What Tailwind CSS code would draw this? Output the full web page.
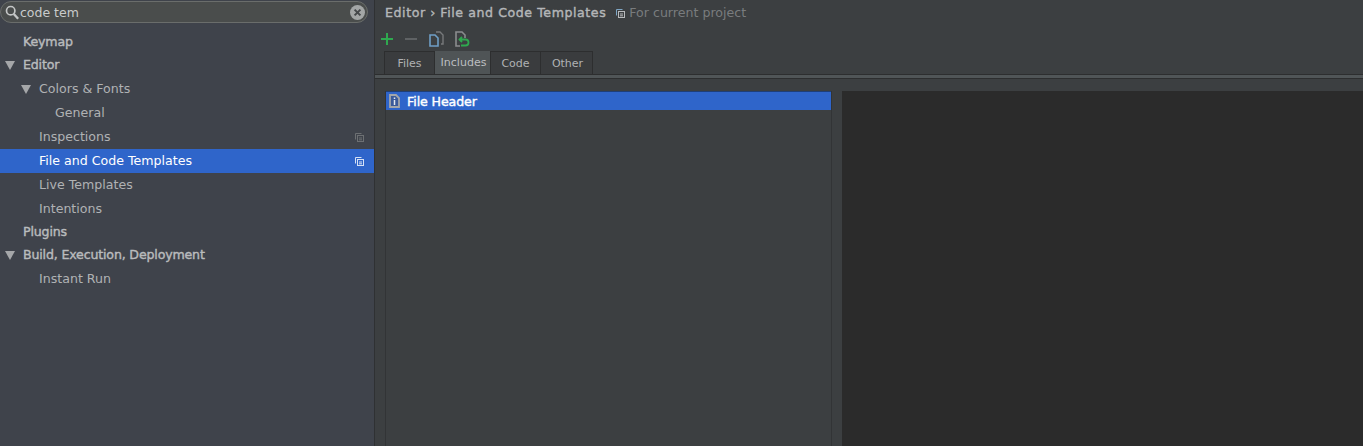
<!DOCTYPE html>
<html lang="en">
<head>
  <meta charset="UTF-8" />
  <title>Settings - File and Code Templates</title>
  <script src="https://cdn.jsdelivr.net/npm/@tailwindcss/browser@4"></script>
</head>
<body class="w-[1363px] h-[446px] overflow-hidden flex bg-[#3c3f41] font-['DejaVu_Sans',sans-serif] text-[12.6px] text-[#b0b2b4]">

  <!-- sidebar -->
  <aside class="w-[375px] h-full shrink-0 bg-[#3f434b] border-r border-[#2f3133]">
    <div class="h-[31px] pt-px pr-[6px]">
      <div class="h-[22px] flex items-center rounded-full border border-[#6a6d6b] bg-[#4a4d4c] pl-[4px] pr-[2px]">
        <svg class="w-[14px] h-[15px] shrink-0" viewBox="0 0 14 15" fill="none" stroke="#c4c6c6"><circle cx="5.7" cy="5.7" r="4.2" stroke-width="1.7"/><path d="M8.8 9l4.4 4.8" stroke-width="2.4"/></svg>
        <span class="ml-px pt-[2px] text-[#c9cbcb] text-[12.5px]">code tem</span>
        <svg class="ml-auto w-[15px] h-[15px]" viewBox="0 0 15 15"><circle cx="7.5" cy="7.5" r="7.5" fill="#a3a6a6"/><path d="M4.6 4.6l5.8 5.8M10.4 4.6l-5.8 5.8" stroke="#45484a" stroke-width="2"/></svg>
      </div>
    </div>
    <div class="h-[23px] flex items-center pl-[23px] [-webkit-text-stroke:0.4px] tracking-[-0.17px] text-[#b9bbbd]">Keymap</div>
    <div class="h-[23px] flex items-center [-webkit-text-stroke:0.4px] tracking-[-0.17px] text-[#b9bbbd]">
      <svg class="w-[10px] h-[9px] ml-[5px] mr-[8px]" viewBox="0 0 10 9"><path d="M0 0h10L5 9z" fill="#a5a7a9"/></svg>Editor
    </div>
    <div class="h-[24px] flex items-center">
      <svg class="w-[10px] h-[9px] ml-[21px] mr-[8px]" viewBox="0 0 10 9"><path d="M0 0h10L5 9z" fill="#a5a7a9"/></svg>Colors &amp; Fonts
    </div>
    <div class="h-[24px] flex items-center pl-[55px]">General</div>
    <div class="h-[24px] flex items-center pl-[39px] pr-[10px]">
      Inspections
      <svg class="ml-auto w-[9px] h-[9px]" viewBox="0 0 9 9" fill="none" stroke="#6d7073"><path d="M6.5 .5h-6v6"/><rect x="2.5" y="2.5" width="6" height="6"/><path d="M4 5h3M4 6.8h3"/></svg>
    </div>
    <div class="h-[24px] flex items-center pl-[39px] pr-[10px] bg-[#2f65ca] text-white">
      File and Code Templates
      <svg class="ml-auto w-[9px] h-[9px]" viewBox="0 0 9 9" fill="none" stroke="#d5e1f6"><path d="M6.5 .5h-6v6"/><rect x="2.5" y="2.5" width="6" height="6"/><path d="M4 5h3M4 6.8h3"/></svg>
    </div>
    <div class="h-[24px] flex items-center pl-[39px]">Live Templates</div>
    <div class="h-[24px] flex items-center pl-[39px]">Intentions</div>
    <div class="h-[23px] flex items-center pl-[23px] [-webkit-text-stroke:0.4px] tracking-[-0.17px] text-[#b9bbbd]">Plugins</div>
    <div class="h-[23px] flex items-center [-webkit-text-stroke:0.4px] tracking-[-0.17px] text-[#b9bbbd]">
      <svg class="w-[10px] h-[9px] ml-[5px] mr-[8px]" viewBox="0 0 10 9"><path d="M0 0h10L5 9z" fill="#a5a7a9"/></svg>Build, Execution, Deployment
    </div>
    <div class="h-[24px] flex items-center pl-[39px]">Instant Run</div>
  </aside>

  <!-- main panel -->
  <main class="flex-1 h-full flex flex-col">
    <div class="h-[26px] flex items-center pl-[10px] shrink-0">
      <span class="[-webkit-text-stroke:0.4px] tracking-[0.56px] text-[#b4b6b8]">Editor › File and Code Templates</span>
      <svg class="ml-[10px] w-[9px] h-[9px]" viewBox="0 0 9 9" fill="none" stroke="#7fa6c4"><path d="M6.5 .5h-6v6"/><rect x="2.5" y="2.5" width="6" height="6" stroke="#b9bbbd"/><path d="M4 5h3M4 6.8h3" stroke="#b9bbbd"/></svg>
      <span class="ml-[4px] text-[#797c7e]">For current project</span>
    </div>

    <!-- toolbar -->
    <div class="h-[25px] shrink-0 flex items-center pl-[5px]">
      <svg class="w-[14px] h-[14px]" viewBox="0 0 14 14"><path d="M7 1v12M1 7h12" stroke="#2fa84f" stroke-width="2"/></svg>
      <svg class="ml-[10px] w-[14px] h-[14px]" viewBox="0 0 14 14"><path d="M1 7h12" stroke="#5f6264" stroke-width="2"/></svg>
      <svg class="ml-[11px] w-[15px] h-[16px]" viewBox="0 0 15 16" fill="none"><path d="M7 1h4l3 3v9h-2" stroke="#77797b" stroke-width="1.4"/><path d="M1 4h5l3 3v8H1z" stroke="#6f9fc6" stroke-width="1.6"/></svg>
      <svg class="ml-[11px] w-[15px] h-[16px]" viewBox="0 0 15 16" fill="none"><path d="M5 15H1V1h6l3 3v3" stroke="#8a8c8e" stroke-width="1.6"/><path d="M7 6L4.5 8.5 7 11M5 8.5h5.5a3 3 0 0 1 0 6H6" stroke="#2fa84f" stroke-width="1.8"/></svg>
    </div>

    <!-- tabs -->
    <div class="h-[23px] shrink-0 flex pl-[9px] text-[11px]">
      <div class="w-[51px] pt-[2px] flex items-center justify-center border border-b-0 border-[#2d2e2f] bg-[#3a3c3e]">Files</div>
      <div class="w-[55px] pt-[2px] pl-[2px] flex items-center justify-center bg-[#4f5456] text-[#bcbec0]">Includes</div>
      <div class="w-[51px] pt-[2px] flex items-center justify-center border border-b-0 border-[#2d2e2f] bg-[#3a3c3e]">Code</div>
      <div class="w-[52px] pt-[2px] pl-[2px] flex items-center justify-center border border-l-0 border-b-0 border-[#2d2e2f] bg-[#3a3c3e]">Other</div>
    </div>
    <div class="h-[5px] shrink-0 bg-[#505557] border-y border-[#2d2e2f]"></div>

    <!-- list and editor -->
    <div class="flex-1 flex pt-[12px] pl-[10px]">
      <div class="w-[447px] border-x border-[#323436]">
        <div class="h-[19px] pt-[2px] flex items-center bg-[#2f65ca] border-t border-[#1f3f78] text-white [-webkit-text-stroke:0.4px] tracking-[-0.1px]">
          <svg class="ml-[3px] -mt-[2px] w-[11px] h-[14px]" viewBox="0 0 11 14" fill="none"><path d="M1 1h6l3 3v9H1z" fill="#3a5a9a" stroke="#a3a6aa" stroke-width="1.8"/><path d="M5.5 3.5v1.5M5.5 6v5" stroke="#e4e8ee" stroke-width="1.5"/></svg>
          <span class="ml-[7px]">File Header</span>
        </div>
      </div>
      <div class="flex-1 ml-[10px] bg-[#2b2b2b]"></div>
    </div>
  </main>
</body>
</html>
